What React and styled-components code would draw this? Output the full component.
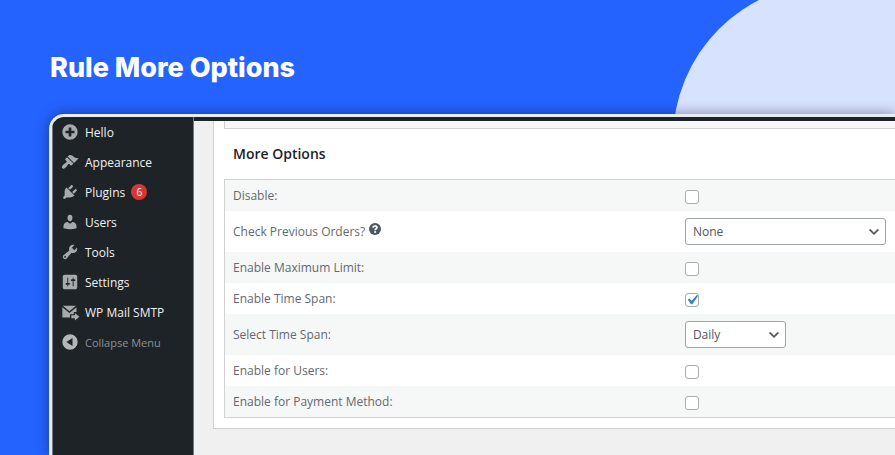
import React from 'react'
import styled, { createGlobalStyle } from 'styled-components'

const GlobalStyle = createGlobalStyle`
  *, *::before, *::after {
    box-sizing: border-box;
  }
  body {
    margin: 0;
    font-family: 'Open Sans', 'Noto Sans', sans-serif;
    font-size: 12px;
  }
`

const Page = styled.div`
  position: relative;
  display: flex;
  flex-direction: column;
  min-height: 100vh;
  overflow: hidden;
  background: #2563ff;
`

const Circle = styled.div`
  position: absolute;
  top: -17px;
  right: -92px;
  width: 314px;
  height: 314px;
  border-radius: 50%;
  background: #d7e2ff;
`

const Title = styled.h1`
  margin: 0;
  padding: 50px 50px 28px;
  font-family: Inter, sans-serif;
  font-size: 27px;
  font-weight: 800;
  line-height: 36px;
  color: #fff;
`

const Frame = styled.div`
  position: relative;
  flex: 1;
  display: flex;
  margin-left: 49px;
  border: solid #e8ebef;
  border-width: 3px 0 0 3px;
  border-radius: 15px 0 0 0;
  overflow: hidden;
  background: #1d2327;
  box-shadow: 0 0 14px rgba(0, 0, 0, 0.4);
`

const Sidebar = styled.nav`
  flex: none;
  display: flex;
  flex-direction: column;
  width: 142px;
  border-left: 1px solid #777b7e;
  border-right: 1px solid #777b7e;
`

const MenuItem = styled.a`
  display: flex;
  align-items: center;
  gap: 6px;
  height: 30px;
  padding-left: 8px;
  font-size: 12px;
  color: #f0f0f1;
  text-decoration: none;
  white-space: nowrap;
  svg {
    flex: none;
    width: 18px;
    height: 18px;
    fill: #a7aaad;
  }
`

const CollapseButton = styled.button`
  display: flex;
  align-items: center;
  gap: 6px;
  height: 30px;
  padding: 0 0 0 8px;
  border: 0;
  background: none;
  font: inherit;
  font-size: 11px;
  color: #8c9196;
  white-space: nowrap;
  svg {
    flex: none;
    width: 18px;
    height: 18px;
    fill: #b4b7ba;
  }
`

const Badge = styled.span`
  display: flex;
  align-items: center;
  justify-content: center;
  width: 16px;
  height: 16px;
  border-radius: 50%;
  background: #d63638;
  font-size: 10px;
  color: #fff;
`

const Main = styled.main`
  flex: 1;
  min-width: 0;
  padding-left: 19px;
  border-top: 4px solid #1d2327;
  background: #f0f0f1;
`

const Panel = styled.section`
  padding: 0 0 10px 10px;
  border: solid #d0d1d3;
  border-width: 0 0 1px 1px;
  background: #fff;
`

const PreviousTable = styled.div`
  height: 8px;
  border: solid #d0d1d3;
  border-width: 0 0 1px 1px;
  background: #f6f7f7;
`

const Heading = styled.h2`
  margin: 0;
  padding: 13px 9px;
  font-size: 14px;
  font-weight: 600;
  line-height: 24px;
  color: #1d2327;
`

const OptionsTable = styled.table`
  width: 100%;
  border: solid #d0d1d3;
  border-width: 1px 0 1px 1px;
  border-spacing: 0;
`

const Row = styled.tr`
  height: ${(props) => (props.$tall ? '41px' : '31px')};
  &:nth-child(odd) {
    background: #f6f7f7;
  }
  th {
    width: 67%;
    padding: 0 8px;
    font-weight: 400;
    text-align: left;
    color: #646970;
  }
  td {
    padding: 0 9px 0 11px;
  }
`

const HelpButton = styled.button`
  width: 12px;
  height: 12px;
  margin-left: 4px;
  padding: 0;
  border: 0;
  background: none;
  vertical-align: 1px;
  svg {
    display: block;
  }
`

const Checkbox = styled.input`
  appearance: none;
  display: block;
  width: 14px;
  height: 14px;
  margin: 3px 0 0;
  border: 1px solid #a9abae;
  border-radius: 3px;
  background: #fff center / 20px no-repeat;
  &:checked {
    background-image: url("data:image/svg+xml;utf8,<svg xmlns='http://www.w3.org/2000/svg' viewBox='0 0 20 20'><path d='M14.83 4.89l1.34.94-5.81 8.38H9.02L5.78 9.67l1.34-1.25 2.57 2.4z' fill='%233582c4'/></svg>");
  }
`

const Select = styled.select`
  appearance: none;
  display: block;
  width: ${(props) => (props.$wide ? '100%' : '101px')};
  height: 27px;
  padding: 0 24px 0 7px;
  border: 1px solid #a0a3a7;
  border-radius: 3px;
  background: #fff
    url("data:image/svg+xml;utf8,<svg xmlns='http://www.w3.org/2000/svg' viewBox='0 0 20 20'><path d='M5 6l5 5 5-5 2 1-7 7-7-7 2-1z' fill='%23555' stroke='%23555' stroke-width='.6'/></svg>")
    no-repeat right 4px center / 14px;
  font: inherit;
  color: #50575e;
`

const icons = {
  hello: (
    <path
      fillRule="evenodd"
      d="M10 1.5a8.5 8.5 0 1 0 0 17 8.5 8.5 0 0 0 0-17zM8.5 5h3v3.5H15v3h-3.5V15h-3v-3.5H5v-3h3.5z"
    />
  ),
  appearance: (
    <path d="M14.48 11.06L7.41 3.99l1.5-1.5c.5-.56 2.3-.47 3.51.32 1.21.8 1.43 1.28 2.91 2.1 1.18.64 2.45 1.26 4.45.85zm-.71.71L6.7 4.7 4.93 6.47c-.39.39-.39 1.02 0 1.41l1.06 1.06c.39.39.39 1.03 0 1.42-.6.6-1.43 1.11-2.21 1.69-.35.26-.7.53-1.01.84C1.43 14.23.4 16.08 1.4 17.07c.99 1 2.84-.03 4.18-1.36.31-.31.58-.66.85-1.02.57-.78 1.08-1.61 1.69-2.21.39-.39 1.02-.39 1.41 0l1.06 1.06c.39.39 1.02.39 1.41 0z" />
  ),
  plugins: (
    <path d="M13.11 4.36L9.87 7.6 8 5.73l3.24-3.24c.35-.34 1.05-.2 1.56.32.52.51.66 1.21.31 1.55zm-8 1.77l.91-1.12 9.01 9.01-1.19.84c-.71.71-2.63 1.16-3.82 1.16H6.14L4.9 17.26c-.59.59-1.54.59-2.12 0-.59-.58-.59-1.53 0-2.12l1.24-1.24v-3.88c0-1.13.4-3.19 1.09-3.89zm7.26 3.97l3.24-3.24c.34-.35 1.04-.21 1.55.31.52.51.66 1.21.31 1.55l-3.24 3.25z" />
  ),
  users: (
    <path d="M10 9.25c-2.27 0-2.73-3.44-2.73-3.44C7 4.02 7.82 2 9.97 2c2.16 0 2.98 2.02 2.71 3.81 0 0-.41 3.44-2.68 3.44zm0 2.57L12.72 10c2.39 0 4.52 2.33 4.52 4.53v2.49s-3.65 1.13-7.24 1.13c-3.65 0-7.24-1.13-7.24-1.13v-2.49c0-2.25 1.94-4.48 4.47-4.48z" />
  ),
  tools: (
    <path d="M16.68 9.77c-1.34 1.34-3.3 1.67-4.95.99l-5.41 6.52c-.99.99-2.59.99-3.58 0s-.99-2.59 0-3.57l6.52-5.42c-.68-1.65-.35-3.61.99-4.95 1.28-1.28 3.12-1.62 4.72-1.06l-2.89 2.89 2.82 2.82 2.86-2.87c.53 1.58.18 3.39-1.08 4.65zM3.81 16.21c.4.39 1.04.39 1.43 0 .4-.4.4-1.04 0-1.43-.39-.4-1.03-.4-1.43 0-.39.39-.39 1.03 0 1.43z" />
  ),
  settings: (
    <path d="M18 16V4c0-1.1-.9-2-2-2H4c-1.1 0-2 .9-2 2v12c0 1.1.9 2 2 2h12c1.1 0 2-.9 2-2zM8 11h1c.55 0 1 .45 1 1s-.45 1-1 1H8v1.5c0 .28-.22.5-.5.5s-.5-.22-.5-.5V13H6c-.55 0-1-.45-1-1s.45-1 1-1h1V5.5c0-.28.22-.5.5-.5s.5.22.5.5V11zm5-2h-1c-.55 0-1-.45-1-1s.45-1 1-1h1V5.5c0-.28.22-.5.5-.5s.5.22.5.5V7h1c.55 0 1 .45 1 1s-.45 1-1 1h-1v5.500c0 .28-.22.5-.5.5s-.5-.22-.5-.5V9z" />
  ),
  mail: (
    <>
      <path d="M2 3h14.5l-7.2 6.2zM1.5 4.6l7.8 6.6 7.9-6.6V10h-3v2.5H10V16H1.5z" />
      <path d="M11.5 13.5h4V11l5 4.2-5 4.2V17h-4z" />
    </>
  ),
  collapse: (
    <path
      fillRule="evenodd"
      d="M10 1.5a8.5 8.5 0 1 0 0 17 8.5 8.5 0 0 0 0-17zM12.8 5.5v9L6 10z"
    />
  ),
}

const Icon = ({ name }) => (
  <svg viewBox="0 0 20 20" overflow="visible" aria-hidden="true">
    {icons[name]}
  </svg>
)

const menu = [
  { icon: 'hello', label: 'Hello' },
  { icon: 'appearance', label: 'Appearance' },
  { icon: 'plugins', label: 'Plugins', count: 6 },
  { icon: 'users', label: 'Users' },
  { icon: 'tools', label: 'Tools' },
  { icon: 'settings', label: 'Settings' },
  { icon: 'mail', label: 'WP Mail SMTP' },
]

const options = [
  { id: 'disable', label: 'Disable:' },
  {
    id: 'previous-orders',
    label: 'Check Previous Orders?',
    help: true,
    wide: true,
    choices: ['None'],
  },
  { id: 'max-limit', label: 'Enable Maximum Limit:' },
  { id: 'time-span', label: 'Enable Time Span:', checked: true },
  {
    id: 'select-time-span',
    label: 'Select Time Span:',
    choices: ['Daily'],
  },
  { id: 'users', label: 'Enable for Users:' },
  { id: 'payment-method', label: 'Enable for Payment Method:' },
]

const Help = () => (
  <HelpButton type="button" aria-label="Help">
    <svg width="12" height="12" viewBox="0 0 12 12">
      <circle cx="6" cy="6" r="6" fill="#50575e" />
      <path
        d="M4.1 4.8C4.1 2.4 8 2.4 8 4.6C8 5.8 6.1 5.8 6.1 7.3"
        fill="none"
        stroke="#fff"
        strokeWidth="1.7"
      />
      <circle cx="6.1" cy="9.1" r="1" fill="#fff" />
    </svg>
  </HelpButton>
)

const OptionRow = ({ id, label, help, wide, choices, checked }) => (
  <Row $tall={!!choices}>
    <th scope="row">
      <label htmlFor={id}>{label}</label>
      {help && <Help />}
    </th>
    <td>
      {choices ? (
        <Select id={id} $wide={wide}>
          {choices.map((choice) => (
            <option key={choice}>{choice}</option>
          ))}
        </Select>
      ) : (
        <Checkbox id={id} type="checkbox" defaultChecked={checked} />
      )}
    </td>
  </Row>
)

const App = () => {
  return (
    <Page>
      <GlobalStyle />
      <Circle />
      <Title>Rule More Options</Title>
      <Frame>
        <Sidebar>
          {menu.map(({ icon, label, count }) => (
            <MenuItem href="#" key={icon}>
              <Icon name={icon} />
              {label}
              {!!count && <Badge>{count}</Badge>}
            </MenuItem>
          ))}
          <CollapseButton type="button">
            <Icon name="collapse" />
            Collapse Menu
          </CollapseButton>
        </Sidebar>
        <Main>
          <Panel>
            <PreviousTable />
            <Heading>More Options</Heading>
            <OptionsTable>
              <tbody>
                {options.map((option) => (
                  <OptionRow key={option.id} {...option} />
                ))}
              </tbody>
            </OptionsTable>
          </Panel>
        </Main>
      </Frame>
    </Page>
  )
}

export default App
